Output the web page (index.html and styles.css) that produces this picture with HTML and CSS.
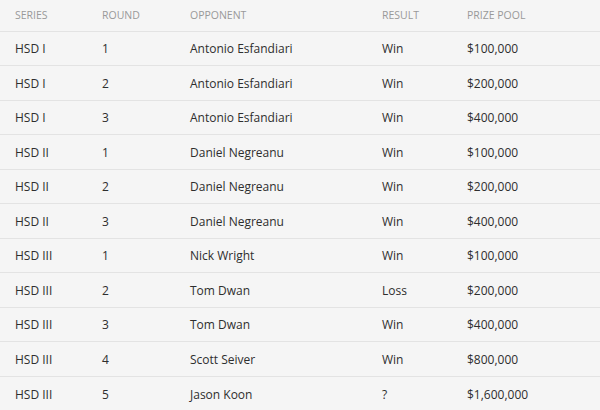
FILE: index.html
```html
<!DOCTYPE html>
<html>
<head>
<meta charset="utf-8">
<link rel="stylesheet" href="styles.css">
</head>
<body>
<table class="results">
  <colgroup>
    <col class="c-series"><col class="c-round"><col class="c-opp"><col class="c-result"><col class="c-prize">
  </colgroup>
  <thead>
    <tr><th>Series</th><th>Round</th><th>Opponent</th><th>Result</th><th>Prize Pool</th></tr>
  </thead>
  <tbody>
    <tr><td>HSD I</td><td>1</td><td>Antonio Esfandiari</td><td>Win</td><td>$100,000</td></tr>
    <tr><td>HSD I</td><td>2</td><td>Antonio Esfandiari</td><td>Win</td><td>$200,000</td></tr>
    <tr><td>HSD I</td><td>3</td><td>Antonio Esfandiari</td><td>Win</td><td>$400,000</td></tr>
    <tr><td>HSD II</td><td>1</td><td>Daniel Negreanu</td><td>Win</td><td>$100,000</td></tr>
    <tr><td>HSD II</td><td>2</td><td>Daniel Negreanu</td><td>Win</td><td>$200,000</td></tr>
    <tr><td>HSD II</td><td>3</td><td>Daniel Negreanu</td><td>Win</td><td>$400,000</td></tr>
    <tr><td>HSD III</td><td>1</td><td>Nick Wright</td><td>Win</td><td>$100,000</td></tr>
    <tr><td>HSD III</td><td>2</td><td>Tom Dwan</td><td>Loss</td><td>$200,000</td></tr>
    <tr><td>HSD III</td><td>3</td><td>Tom Dwan</td><td>Win</td><td>$400,000</td></tr>
    <tr><td>HSD III</td><td>4</td><td>Scott Seiver</td><td>Win</td><td>$800,000</td></tr>
    <tr><td>HSD III</td><td>5</td><td>Jason Koon</td><td>?</td><td>$1,600,000</td></tr>
  </tbody>
</table>
</body>
</html>
```

FILE: styles.css
```css
html, body {
  margin: 0;
  padding: 0;
  background: #f5f5f5;
}
body {
  font-family: "Open Sans", "Liberation Sans", sans-serif;
  color: #2e2e2e;
}
.results {
  width: 600px;
  border-collapse: collapse;
  table-layout: fixed;
}
.c-series { width: 87px; }
.c-round { width: 88px; }
.c-opp { width: 192px; }
.c-result { width: 85px; }
.c-prize { width: 148px; }
.results th {
  text-align: left;
  font-weight: 400;
  font-size: 10.5px;
  text-transform: uppercase;
  color: #999;
  height: 31px;
  padding: 0 15px;
  box-sizing: border-box;
  line-height: 16px;
}
.results td {
  font-size: 12px;
  line-height: 18px;
  height: 34.5px;
  padding: 2px 15px 0;
  box-sizing: border-box;
  border-top: 1px solid #e3e3e3;
  white-space: nowrap;
}
```
